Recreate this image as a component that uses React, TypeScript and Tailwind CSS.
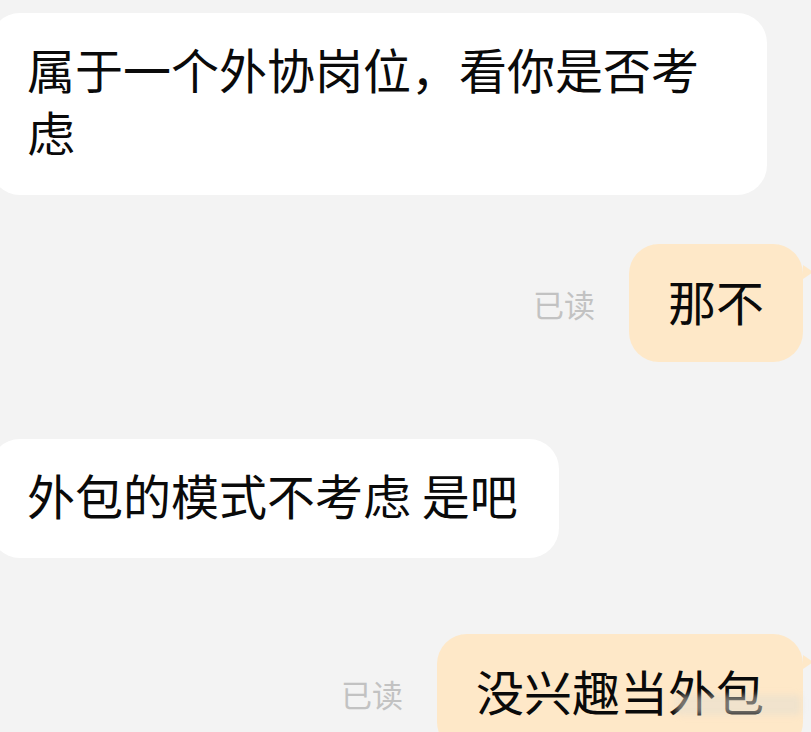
import React from "react";

const font = { fontFamily: '"Noto Sans CJK SC", "Noto Sans", sans-serif' };

const LeftBubble = ({ text, className }: { text: string; className: string }) => (
  <div className={`flex ${className}`}>
    <div className="-ml-[10px] max-w-[777px] rounded-[30px] bg-white pl-[37px] pr-[41px] pt-[24px] pb-[32px] text-[48px] leading-[63px] text-[#0a0a0a]">
      {text}
    </div>
  </div>
);

const RightBubble = ({ text, className }: { text: string; className: string }) => (
  <div className={`flex items-center justify-end pr-[8px] ${className}`}>
    <span className="mr-[34px] text-[31px] leading-none text-[#c2c2c2]">已读</span>
    <div className="relative rounded-[30px] bg-[#fee8c8] px-[39px] pt-[24px] pb-[30px] text-[48px] leading-[64px] text-[#0a0a0a]">
      {text}
      <div className="absolute left-full top-[21px] h-0 w-0 border-y-[7px] border-l-[10px] border-y-transparent border-l-[#fee8c8]" />
    </div>
  </div>
);

export default function App() {
  return (
    <div className="relative h-[732px] w-[811px] overflow-hidden bg-[#f3f3f3]" style={font}>
      <LeftBubble className="pt-[13px]" text="属于一个外协岗位，看你是否考虑" />
      <RightBubble className="mt-[49px]" text="那不" />
      <LeftBubble className="mt-[77px]" text="外包的模式不考虑 是吧" />
      <RightBubble className="mt-[76px]" text="没兴趣当外包" />
      {/* blurred watermark */}
      <div className="absolute left-[676px] top-[695px] h-[20px] w-[125px] rounded bg-[#e4ddd2]/50 blur-[3px]" />
    </div>
  );
}
